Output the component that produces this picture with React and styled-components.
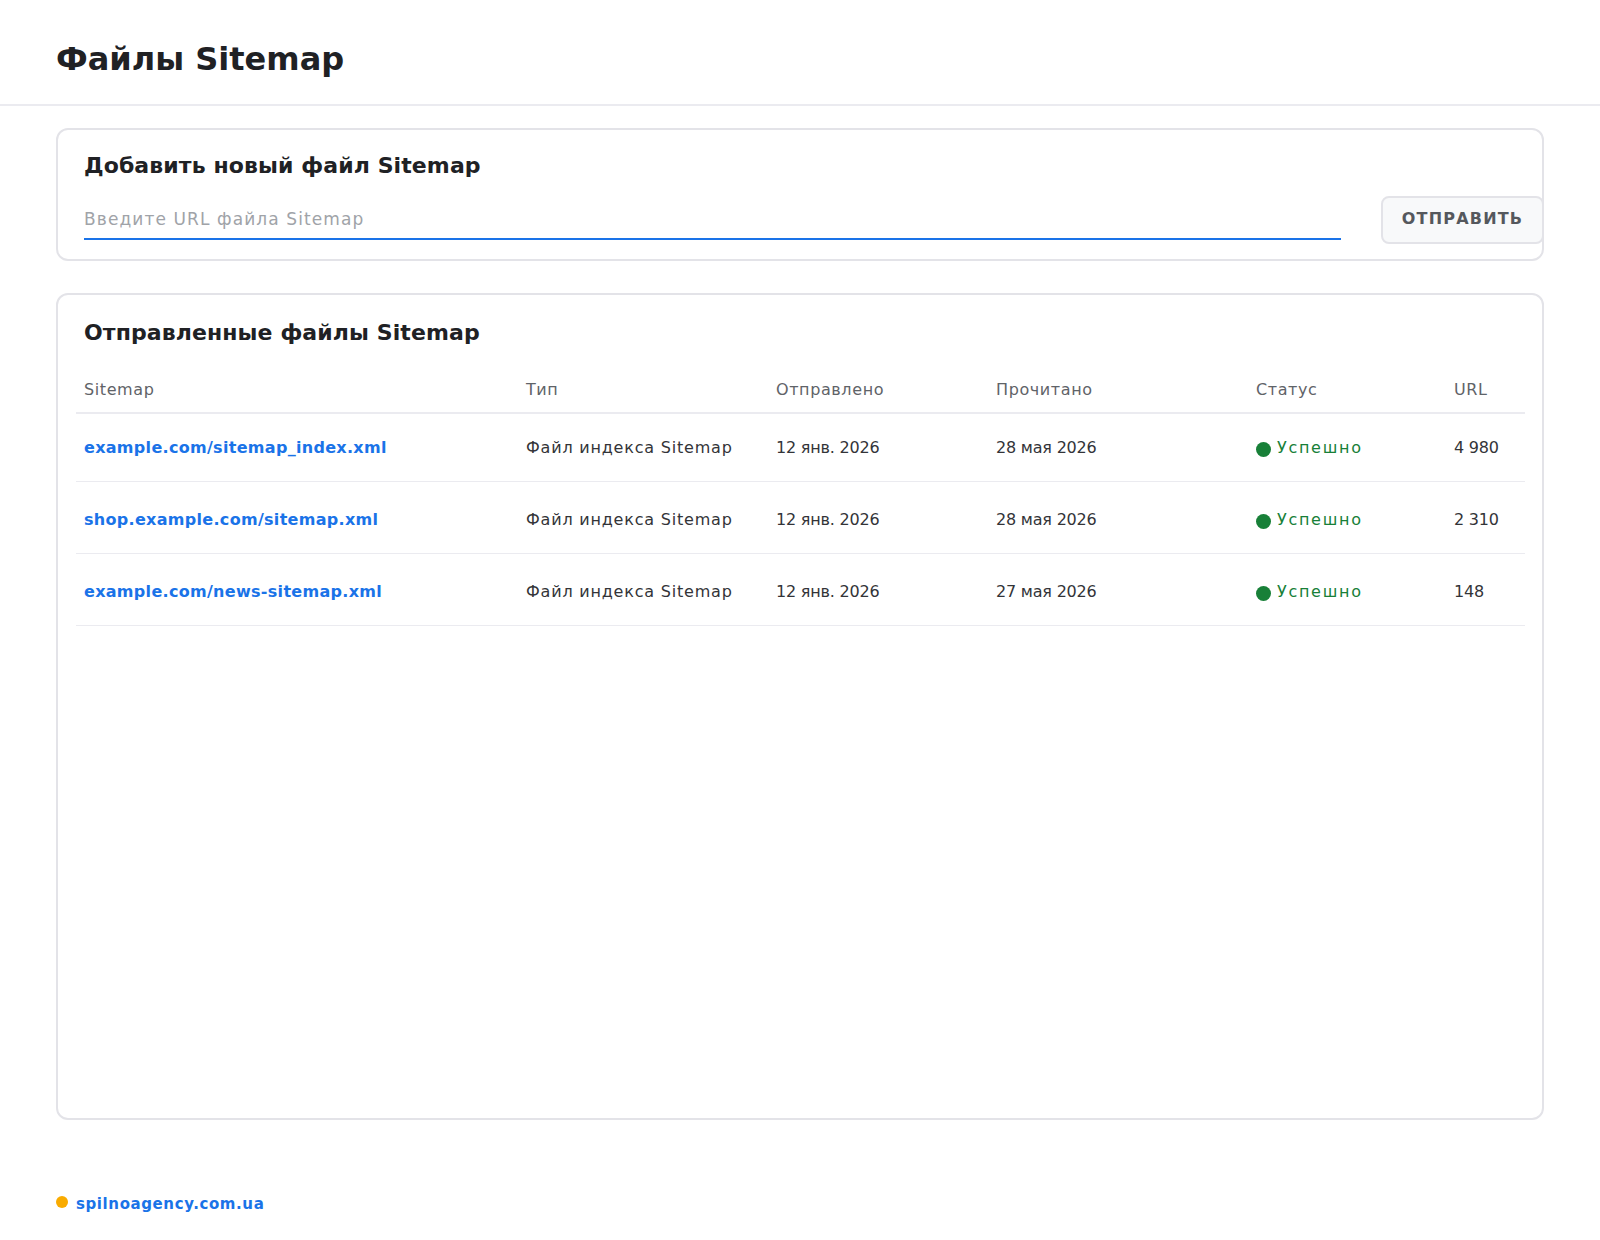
import React from "react";
import styled, { createGlobalStyle } from "styled-components";

const GlobalStyle = createGlobalStyle`
  html, body { margin: 0; padding: 0; background: #ffffff; }
  body { font-family: "DejaVu Sans", "Noto Sans", sans-serif; color: #202124; }
  * { box-sizing: border-box; }
`;

const Page = styled.div`
  width: 1600px;
  min-height: 1240px;
  display: flex;
  flex-direction: column;
`;

const Header = styled.header`
  height: 106px;
  padding: 39px 56px 0;
  display: flex;
  align-items: flex-start;
  border-bottom: 2px solid #ebebf0;
`;

const PageTitle = styled.h1`
  margin: 0;
  font-size: 32px;
  line-height: 40px;
  font-weight: 700;
  color: #202124;
`;

const Main = styled.main`
  padding: 22px 56px 0;
  display: flex;
  flex-direction: column;
  gap: 32px;
`;

const Card = styled.section`
  border: 2px solid #e3e3e8;
  border-radius: 12px;
  background: #fff;
  display: flex;
  flex-direction: column;
  padding: ${(p) => p.$padding};
  height: ${(p) => (p.$height ? `${p.$height}px` : "auto")};
`;

const CardTitle = styled.h2`
  margin: 0;
  padding-left: ${(p) => p.$indent || 0}px;
  font-size: 22px;
  line-height: 28px;
  font-weight: 700;
  letter-spacing: 0.1px;
  color: #202124;
`;

const FormRow = styled.div`
  margin-top: 16px;
  margin-right: -28px;
  display: flex;
  align-items: flex-start;
  gap: 40px;
`;

const UrlInput = styled.input`
  flex: 1;
  height: 44px;
  border: none;
  border-bottom: 2px solid #1a73e8;
  outline: none;
  padding: 4px 0 0;
  font-family: inherit;
  font-size: 17px;
  letter-spacing: 1.1px;
  color: #202124;
  background: transparent;
  &::placeholder { color: #a0a3a8; }
`;

const SubmitButton = styled.button`
  width: 163px;
  height: 48px;
  border: 2px solid #e3e3e8;
  border-radius: 8px;
  background: #f8f9fa;
  font-family: inherit;
  font-size: 16px;
  font-weight: 700;
  letter-spacing: 1.2px;
  color: #55585d;
  padding: 0 0 3px;
  cursor: pointer;
`;

const Table = styled.table`
  margin-top: 22px;
  width: 100%;
  border-collapse: collapse;
  table-layout: fixed;
`;

const HeadCell = styled.th`
  text-align: left;
  font-weight: 400;
  font-size: 16px;
  line-height: 20px;
  letter-spacing: 0.6px;
  color: #5f6368;
  padding: 11px 8px 12px;
  border-bottom: 2px solid #ebebf0;
`;

const Row = styled.tr`
  border-bottom: 1px solid #ebebf0;
  &:first-child td { padding-top: 22px; }
`;

const Cell = styled.td`
  padding: 26px 8px 21px;
  font-size: 16px;
  line-height: 24px;
  letter-spacing: ${(p) => (p.$numeric ? "-0.2px" : "0.8px")};
  color: #333438;
  white-space: nowrap;
  vertical-align: middle;
`;

const SitemapLink = styled.a`
  color: #1a73e8;
  font-weight: 700;
  text-decoration: none;
  letter-spacing: 0.3px;
`;

const Status = styled.div`
  display: flex;
  align-items: center;
  gap: 6px;
  color: #188038;
  letter-spacing: 1.7px;
`;

const Dot = styled.span`
  display: block;
  width: ${(p) => p.$size}px;
  height: ${(p) => p.$size}px;
  border-radius: 50%;
  background: ${(p) => p.$color};
  flex-shrink: 0;
  margin-top: ${(p) => p.$offset || 0}px;
`;

const Footer = styled.footer`
  margin-top: auto;
  padding: 0 56px 26px;
  display: flex;
  align-items: center;
  gap: 8px;
`;

const FooterLink = styled.a`
  color: #1a73e8;
  font-weight: 700;
  font-size: 15px;
  line-height: 20px;
  letter-spacing: 0.6px;
  text-decoration: none;
  margin-top: 4px;
`;

const rows = [
  { url: "example.com/sitemap_index.xml", type: "Файл индекса Sitemap", sent: "12 янв. 2026", read: "28 мая 2026", count: "4 980" },
  { url: "shop.example.com/sitemap.xml", type: "Файл индекса Sitemap", sent: "12 янв. 2026", read: "28 мая 2026", count: "2 310" },
  { url: "example.com/news-sitemap.xml", type: "Файл индекса Sitemap", sent: "12 янв. 2026", read: "27 мая 2026", count: "148" },
];

const columns = [
  { label: "Sitemap", width: 442 },
  { label: "Тип", width: 250 },
  { label: "Отправлено", width: 220 },
  { label: "Прочитано", width: 260 },
  { label: "Статус", width: 198 },
  { label: "URL", width: 79 },
];

export default function App() {
  return (
    <>
      <GlobalStyle />
      <Page>
        <Header>
          <PageTitle>Файлы Sitemap</PageTitle>
        </Header>
        <Main>
          <Card $padding="22px 26px 15px">
            <CardTitle>Добавить новый файл Sitemap</CardTitle>
            <FormRow>
              <UrlInput placeholder="Введите URL файла Sitemap" />
              <SubmitButton>ОТПРАВИТЬ</SubmitButton>
            </FormRow>
          </Card>
          <Card $padding="24px 18px" $height={827}>
            <CardTitle $indent={8}>Отправленные файлы Sitemap</CardTitle>
            <Table>
              <colgroup>
                {columns.map((c) => (
                  <col key={c.label} style={{ width: c.width }} />
                ))}
              </colgroup>
              <thead>
                <tr>
                  {columns.map((c) => (
                    <HeadCell key={c.label}>{c.label}</HeadCell>
                  ))}
                </tr>
              </thead>
              <tbody>
                {rows.map((r) => (
                  <Row key={r.url}>
                    <Cell>
                      <SitemapLink href="#">{r.url}</SitemapLink>
                    </Cell>
                    <Cell>{r.type}</Cell>
                    <Cell $numeric>{r.sent}</Cell>
                    <Cell $numeric>{r.read}</Cell>
                    <Cell>
                      <Status>
                        <Dot $size={15} $color="#188038" $offset={3} />
                        Успешно
                      </Status>
                    </Cell>
                    <Cell $numeric>{r.count}</Cell>
                  </Row>
                ))}
              </tbody>
            </Table>
          </Card>
        </Main>
        <Footer>
          <Dot $size={12} $color="#f9ab00" $offset={-1} />
          <FooterLink href="#">spilnoagency.com.ua</FooterLink>
        </Footer>
      </Page>
    </>
  );
}
